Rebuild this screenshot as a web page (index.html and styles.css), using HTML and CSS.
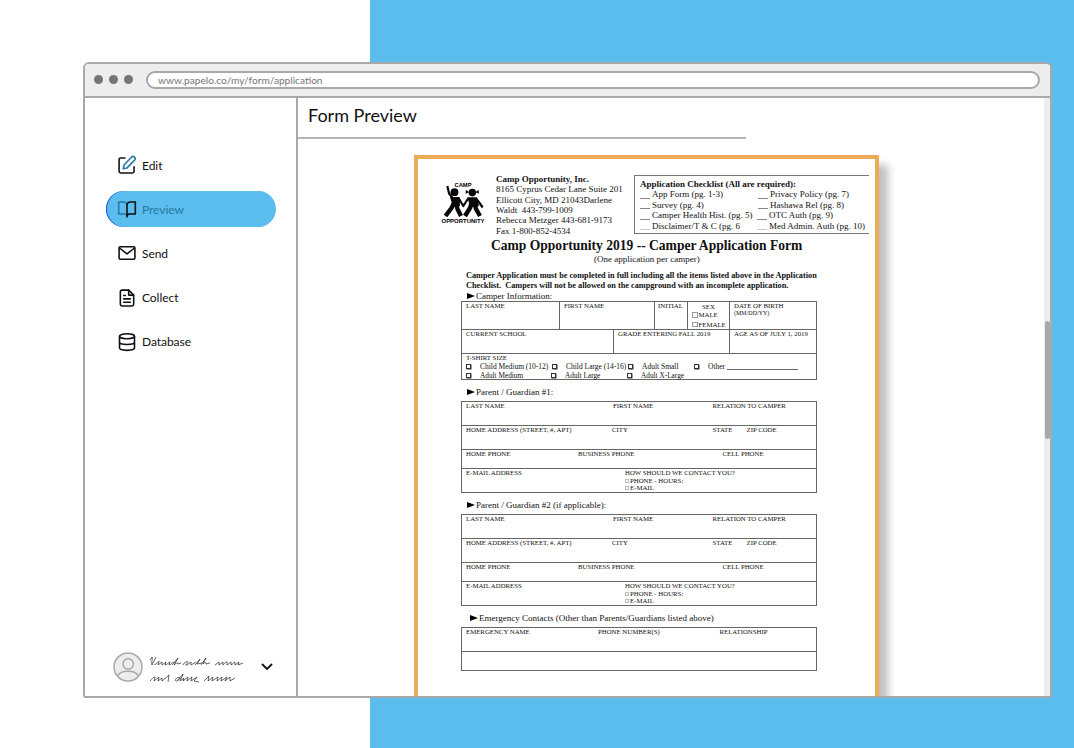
FILE: index.html
```html
<!DOCTYPE html>
<html lang="en">
<head>
<meta charset="utf-8">
<title>Form Preview</title>
<link rel="stylesheet" href="styles.css">
</head>
<body>
<div class="window">
  <header class="bar">
    <i class="dot"></i><i class="dot"></i><i class="dot"></i>
    <div class="url"><span>www.papelo.co/my/form/application</span></div>
  </header>
  <div class="body">
    <aside class="side">
      <nav class="nav">
        <a class="item"><svg class="ico" viewBox="0 0 24 24"><path d="M9.500 3.500h-5a2 2 0 0 0-2 2v14a2 2 0 0 0 2 2h14a2 2 0 0 0 2-2V14"/><path class="teal" d="M17.300 2.600a2.200 2.200 0 0 1 3.800 3.600L12 15.500l-4.500 1 1-4.500z"/></svg><span>Edit</span></a>
        <a class="item active"><svg class="ico" viewBox="0 0 24 24"><path class="teal" d="M12 20.500a3 3 0 0 0-3-2.500H2V3.500h6a4 4 0 0 1 4 4"/><path d="M12 21.500V7.500a4 4 0 0 1 4-4h6V18h-7a3 3 0 0 0-3 3"/></svg><span>Preview</span></a>
        <a class="item"><svg class="ico" viewBox="0 0 24 24"><rect x="2.500" y="4.500" width="19" height="15" rx="1.500"/><path d="m3 6 9 7 9-7"/></svg><span>Send</span></a>
        <a class="item"><svg class="ico" viewBox="0 0 24 24"><path d="M14 2.500H6a2 2 0 0 0-2 2v15a2 2 0 0 0 2 2h12a2 2 0 0 0 2-2V8.500z"/><path d="M14 2.500v6h6M16 13H8M16 17H8M10 9H8"/></svg><span>Collect</span></a>
        <a class="item"><svg class="ico" viewBox="0 0 24 24"><ellipse cx="12" cy="5" rx="9" ry="3"/><path d="M3 5v14c0 1.700 4 3 9 3s9-1.300 9-3V5M3 12c0 1.700 4 3 9 3s9-1.300 9-3"/></svg><span>Database</span></a>
      </nav>
      <div class="user">
        <svg class="avatar" viewBox="0 0 30 30"><circle cx="15" cy="15" r="14"/><circle cx="15.200" cy="12" r="5.200"/><path d="M4.500 24.200c3-6.500 18-6.500 21 0"/></svg>
        <svg class="scrawl" viewBox="0 0 96 32"><path d="M1 5l2-3c1 0-1 7 0 8l4-8M5 9c1 2 5-3 5-3l-1 4 4-3 0 3 4-3-1 3c2 0 4-3 5-3l-1 3c2 0 3-3 5-3M23 10l6-7-4 7c2-2 4-3 4-1l3-1M34 10c1-3 5-4 5-3s-4 4-1 3l4-3 0 3 5-3M46 10l5-6-3 5 5-1M52 10l5-7-3 6c2-2 3-2 3 0l4-1M66 10l4-3 0 3 4-3 0 3c2-2 3-4 4-3l0 3 4-3 0 3c2-1 3-3 4-3l0 3 4-3-1 3 5-2M1 26c2-2 3-4 5-4l-1 4 5-4-1 4 4-3 0 3 7-6-1 7M26 26c1-4 4-4 5-3s-5 4-3 3l6-7-3 7 4-3-1 3 5-4-1 4 5-4-1 4 6-4-3 4 5 1M55 26l5-5-1 5 5-4-1 4 6-4-1 4 5-4-1 4 6-4-2 4 5-4 0 4 5-3"/></svg>
        <svg class="chev" viewBox="0 0 12 8"><path d="m1.500 1.500 4.500 4.500 4.500-4.500"/></svg>
      </div>
    </aside>
    <main class="main">
      <h1>Form Preview</h1>
      <div class="sheet">
        <div class="head">
          <svg class="logo" viewBox="0 0 46 44">
            <text x="13.500" y="6.300" textLength="17" lengthAdjust="spacingAndGlyphs">CAMP</text>
            <text x="0.500" y="41.500" textLength="43" lengthAdjust="spacingAndGlyphs">OPPORTUNITY</text>
            <g class="fig"><circle cx="13.500" cy="11.200" r="3.900"/><circle cx="31.300" cy="11.600" r="3.800"/><path d="M28 11.200l-3.500 1.500.5-4zM34.500 11.200l3.500 1.500-.5-4zM9 16h9.500l.5 9-7 1zM26.500 16.300H36l2 9-9 1z"/></g>
            <g class="limb"><path class="w3" d="M6.300 5l1.800 7.500 3.400 4.500M17.500 17l4.800 8 5.200-8M35 17.500l3.200 4 3.500 5"/><path class="w5" d="M13.500 21l-3 6-6 8M15 22l1.500 6 3.500 7M31 21l-2 6-5 8M33 21l2 7 4 7"/></g>
          </svg>
          <div class="addr"><b>Camp Opportunity, Inc.</b><br>8165 Cyprus Cedar Lane Suite 201<br>Ellicott City, MD 21043Darlene<br>Waldt&nbsp; 443-799-1009<br>Rebecca Metzger 443-681-9173<br>Fax 1-800-852-4534</div>
          <div class="check">
            <b>Application Checklist (All are required):</b>
            <div class="pair"><span><i></i>App Form (pg. 1-3)</span><span><i></i>Privacy Policy (pg. 7)</span></div>
            <div class="pair"><span><i></i>Survey (pg. 4)</span><span><i></i>Hashawa Rel (pg. 8)</span></div>
            <div class="pair third"><span><i></i>Camper Health Hist. (pg. 5)</span><span><i></i>OTC Auth (pg. 9)</span></div>
            <div class="pair light"><span><i></i>Disclaimer/T &amp; C (pg. 6</span><span><i></i>Med Admin. Auth (pg. 10)</span></div>
          </div>
        </div>
        <h2>Camp Opportunity 2019 -- Camper Application Form</h2>
        <p class="sub">(One application per camper)</p>
        <p class="note">Camper Application must be completed in full including all the items listed above in the Application<br>Checklist.&nbsp; Campers will not be allowed on the campground with an incomplete application.</p>
        <h3 class="camper"><i class="tri"></i>Camper Information:</h3>
        <section class="table">
          <div class="row c1"><span>LAST NAME</span><span>FIRST NAME</span><span>INITIAL</span><div class="sex"><span>SEX</span><span><i></i>MALE</span><span><i></i>FEMALE</span></div><span class="dob">DATE OF BIRTH<small>(MM/DD/YY)</small></span></div>
          <div class="row c2"><span>CURRENT SCHOOL</span><span>GRADE ENTERING FALL 2019</span><span>AGE AS OF JULY 1, 2019</span></div>
          <div class="row shirts"><span>T-SHIRT SIZE</span>
            <div class="sizes"><i></i><span>Child Medium (10-12)</span><i></i><span>Child Large (14-16)</span><i></i><span>Adult Small</span><i></i><span class="other">Other<u></u></span></div>
            <div class="sizes s2"><i></i><span>Adult Medium</span><i></i><span>Adult Large</span><i></i><span>Adult X-Large</span></div>
          </div>
        </section>
        <h3 class="pg"><i class="tri"></i>Parent / Guardian #1:</h3>
        <section class="table">
          <div class="row p1"><span>LAST NAME</span><span>FIRST NAME</span><span>RELATION TO CAMPER</span></div>
          <div class="row p2"><span>HOME ADDRESS (STREET, #, APT)</span><span>CITY</span><span>STATE</span><span>ZIP CODE</span></div>
          <div class="row p3"><span>HOME PHONE</span><span>BUSINESS PHONE</span><span>CELL PHONE</span></div>
          <div class="row p4"><span>E-MAIL ADDRESS</span><div><span>HOW SHOULD WE CONTACT YOU?</span><span class="opt"><i></i>PHONE - HOURS:</span><span class="opt"><i></i>E-MAIL</span></div></div>
        </section>
        <h3 class="pg"><i class="tri"></i>Parent / Guardian #2 (if applicable):</h3>
        <section class="table">
          <div class="row p1"><span>LAST NAME</span><span>FIRST NAME</span><span>RELATION TO CAMPER</span></div>
          <div class="row p2"><span>HOME ADDRESS (STREET, #, APT)</span><span>CITY</span><span>STATE</span><span>ZIP CODE</span></div>
          <div class="row p3"><span>HOME PHONE</span><span>BUSINESS PHONE</span><span>CELL PHONE</span></div>
          <div class="row p4"><span>E-MAIL ADDRESS</span><div><span>HOW SHOULD WE CONTACT YOU?</span><span class="opt"><i></i>PHONE - HOURS:</span><span class="opt"><i></i>E-MAIL</span></div></div>
        </section>
        <h3 class="pg em"><i class="tri"></i>Emergency Contacts (Other than Parents/Guardians listed above)</h3>
        <section class="table">
          <div class="row e1"><span>EMERGENCY NAME</span><span>PHONE NUMBER(S)</span><span>RELATIONSHIP</span></div>
          <div class="row e2"></div>
        </section>
      </div>
    </main>
    <div class="track"><div class="thumb"></div></div>
  </div>
</div>
</body>
</html>
```
FILE: styles.css
```css
* { box-sizing: border-box; }
body {
  margin: 0;
  height: 748px;
  padding: 62px 22px 50px 83px;
  overflow: hidden;
  background: linear-gradient(90deg, #fff 370px, #5bbcee 370px);
  font-family: Lato, sans-serif;
  color: #111;
}
.window {
  height: 636px;
  display: flex;
  flex-direction: column;
  border: 2px solid #a9a9a9;
  border-radius: 6px 6px 3px 3px;
  background: #fff;
  overflow: hidden;
}
.bar {
  height: 34px;
  flex: none;
  display: flex;
  align-items: center;
  padding: 0 10px 1px 9px;
  background: #ededed;
  border-bottom: 2px solid #a9a9a9;
}
.dot { width: 9px; height: 9px; margin-right: 6px; border-radius: 50%; background: #757575; }
.url {
  flex: 1;
  height: 18px;
  margin-left: 7px;
  padding-left: 10px;
  border: 2px solid #a9a9a9;
  border-radius: 9px;
  background: #fff;
  color: #757575;
  font-size: 10.15px;
  line-height: 14px;
}
.body { flex: 1; min-height: 0; display: flex; }
.side {
  width: 213px;
  flex: none;
  display: flex;
  flex-direction: column;
  justify-content: space-between;
  padding: 49px 0 13px 21px;
  border-right: 2px solid #a9a9a9;
}
.nav { display: flex; flex-direction: column; gap: 8.2px; }
.item {
  width: 170px;
  height: 36px;
  display: flex;
  align-items: center;
  gap: 5px;
  padding-left: 11px;
  border-radius: 18px;
  font-size: 12px;
  letter-spacing: -.05px;
}
.ico { width: 20px; height: 20px; fill: none; stroke: #111; stroke-width: 1.9; stroke-linejoin: round; stroke-linecap: round; }
.teal { stroke: #257ba3; }
.active { background: #5bbcee; color: #257ba3; box-shadow: inset 1px 0 0 #1557e6; }
.user { display: flex; align-items: center; padding-left: 7px; }
.avatar { width: 30px; height: 30px; fill: #ededed; stroke: #a9a9a9; stroke-width: 1.5; }
.scrawl { width: 96px; height: 32px; margin: 4px 0 -4px 6px; fill: none; stroke: #222; stroke-width: .7; }
.chev { width: 12px; height: 8px; margin-left: 16px; fill: none; stroke: #111; stroke-width: 1.9; stroke-linecap: round; }
.main { flex: 1; min-width: 0; overflow: hidden; }
h1 {
  width: 448px;
  height: 41px;
  margin: 0 0 16px;
  padding-left: 10px;
  border-bottom: 2px solid #b5b5b5;
  font-size: 18px;
  font-weight: 400;
  line-height: 35px;
}
.track { width: 6px; flex: none; background: #ededed; padding: 223px 0 0 1px; }
.thumb { width: 5px; height: 118px; border-radius: 2.5px; background: #a9a9a9; }

.sheet {
  width: 465px;
  height: 580px;
  margin-left: 116px;
  border: 4px solid #eeab57;
  background: #fff;
  box-shadow: 9px 10px 8px rgba(0, 0, 0, .25);
  font-family: "Liberation Serif", serif;
  white-space: nowrap;
}
.head { height: 79px; display: flex; align-items: flex-start; padding: 15px 0 0 23px; }
.logo { flex: none; width: 46px; height: 44px; margin-top: 7px; font: bold 6px "Liberation Sans", sans-serif; }
.fig { fill: #080808; }
.limb { fill: none; stroke: #080808; stroke-linejoin: round; }
.w3 { stroke-width: 2.2; }
.w5 { stroke-width: 4.4; }
.addr { flex: none; width: 147px; padding-left: 9px; font-size: 9px; line-height: 10.35px; }
.check {
  width: 235px;
  flex: none;
  height: 59px;
  margin-top: 1px;
  padding: 3px 0 0 5px;
  border: 1px solid #777;
  border-right: 0;
  font-size: 9px;
  line-height: 10.4px;
}
.check b { display: block; }
.pair { display: grid; grid-template-columns: 118px 1fr; }
.pair span { display: flex; gap: 2px; }
.pair i { width: 10px; height: 9.5px; border-bottom: 1px solid #888; }
.third { grid-template-columns: 117px 1fr; }
.light { grid-template-columns: 117px 1fr; }
.light i { border-color: #ccc; }
h2 { margin: 0; font-size: 13.55px; line-height: 16px; padding-left: 73px; }
.sub { margin: 0; padding-left: 176px; font-size: 9px; line-height: 11px; }
.note { margin: 6px 0 0 48px; font-size: 8.26px; line-height: 10.2px; font-weight: bold; }
h3 { display: flex; align-items: center; gap: 1px; margin: 0 0 0 49px; height: 10px; font-size: 9px; font-weight: 400; line-height: 10px; }
.pg { height: 21px; padding-top: 3px; }
.em { margin-left: 52px; }
.tri { border-left: 8px solid #000; border-top: 3.5px solid transparent; border-bottom: 3.5px solid transparent; }
.table { width: 356px; margin-left: 43px; border: 1px solid #666; border-top: 0; font-size: 6.8px; line-height: 7.5px; }
.row { display: grid; border-top: 1px solid #666; padding-left: 4px; }
.c1 { height: 28px; grid-template-columns: 94px 95px 33px 42px 1fr; }
.c2 { height: 24px; grid-template-columns: 148px 116px 1fr; }
.c1 > *, .c2 > * { border-right: 1px solid #666; }
.c1 > :last-child, .c2 > :last-child { border-right: 0; }
.c1 > :nth-child(n+2), .c2 > :nth-child(n+2) { padding-left: 4px; }
.c1 > :nth-child(3) { padding-left: 3px; }
small { display: block; font-size: 6px; line-height: 6px; }
.sex { display: flex; flex-direction: column; }
.sex > span { height: 9.4px; display: flex; align-items: center; gap: 1px; }
.sex > span:first-child { padding-left: 10px; height: 8px; }
.sex i { width: 5.5px; height: 5.5px; border: 1px solid #999; }
.shirts { height: 26px; align-content: start; }
.sizes { display: grid; grid-template-columns: 14px 72px 14px 62px 14px 52px 14px 1fr; align-items: center; font-size: 7.5px; height: 9px; }
.s2 { grid-template-columns: 14px 71px 14px 62px 14px 1fr; font-size: 7.3px; }
.sizes i { width: 5px; height: 5px; border: 1px solid #333; box-shadow: .5px .5px 0 #333; }
.other { display: flex; align-items: flex-end; gap: 2px; }
.other u { width: 71px; border-bottom: 1px solid #666; }
.p1, .p2, .e1 { height: 24px; }
.p3 { height: 19px; }
.p4 { height: 24px; grid-template-columns: 159px 1fr; }
.p1 { grid-template-columns: 147px 99.5px 1fr; }
.p2 { grid-template-columns: 146px 100.5px 34px 1fr; }
.p3 { grid-template-columns: 112px 144.5px 1fr; }
.p4 div { display: flex; flex-direction: column; }
.opt { display: flex; align-items: center; gap: 1px; }
.opt i { width: 4px; height: 4px; border: 1px solid #bbb; }
.e1 { grid-template-columns: 132px 121.5px 1fr; }
.e2 { height: 19px; }
```
